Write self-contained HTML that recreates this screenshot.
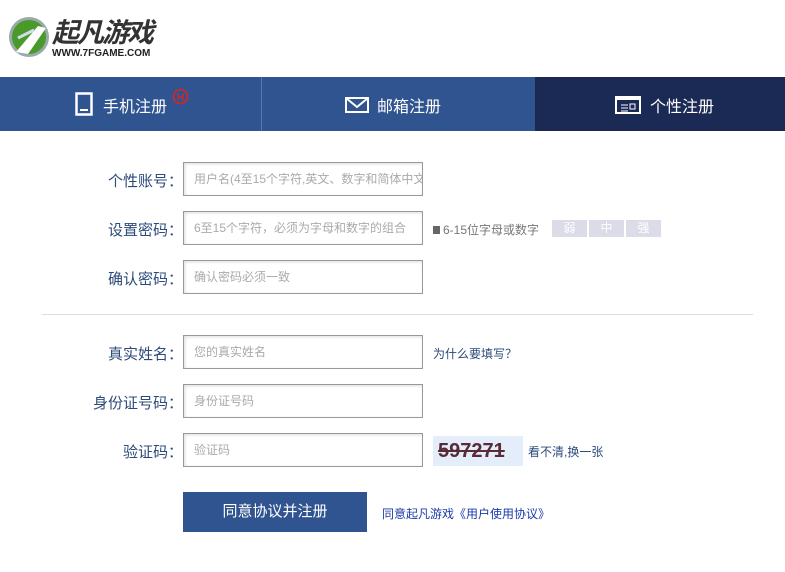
<!DOCTYPE html>
<html><head><meta charset="utf-8"><style>
*{margin:0;padding:0;box-sizing:border-box}
body{width:785px;height:572px;background:#fff;font-family:"Liberation Sans","Noto Sans CJK SC",sans-serif;position:relative;overflow:hidden}
.a{position:absolute}
.nav{left:0;top:77px;width:785px;height:54px;background:#2f5490}
.t{color:#fff;font-size:16px;top:16px;white-space:nowrap}
.lbl{color:#2c4a7a;font-size:15px;text-align:right;width:183px;left:0}
.in{left:183px;width:240px;height:34px;border:1px solid #999;box-shadow:inset 1px 1px 3px #ddd;color:#aaa;font-size:12px;padding-left:10px;line-height:32px;white-space:nowrap;overflow:hidden}
</style></head><body>
<svg class="a" style="left:8px;top:16px" width="42" height="42" viewBox="0 0 42 42"><circle cx="21" cy="21" r="20" fill="#9aa"/><circle cx="21" cy="21" r="17" fill="#4a9a2a"/><path d="M8 36 L30 10 L38 12 L20 38Z" fill="#fff"/><path d="M10 22 L26 14" stroke="#cde" stroke-width="3"/></svg>
<div class="a" style="left:52px;top:17px;font-size:27px;font-weight:bold;font-style:italic;color:#333;letter-spacing:-2px;line-height:32px">起凡游戏</div>
<div class="a" style="left:52px;top:48px;font-size:10px;font-weight:bold;color:#222">WWW.7FGAME.COM</div>
<div class="a nav">
 <svg class="a" style="left:75px;top:15px" width="18" height="24"><rect x="1.5" y="1.5" width="15" height="21" fill="none" stroke="#fff" stroke-width="2.5"/><rect x="5" y="17" width="8" height="2" fill="#fff"/></svg>
 <div class="a t" style="left:103px">手机注册</div>
 <svg class="a" style="left:172px;top:11px" width="17" height="17"><circle cx="8.5" cy="8.5" r="7" fill="none" stroke="#d22" stroke-width="1.6"/><text x="8.5" y="12.5" font-size="10" fill="#d22" text-anchor="middle" font-family="Liberation Sans" font-weight="bold">H</text></svg>
 <div class="a" style="left:261px;top:0;width:1px;height:54px;background:#5a78a8"></div>
 <svg class="a" style="left:345px;top:20px" width="24" height="16"><rect x="1" y="1" width="22" height="14" fill="none" stroke="#fff" stroke-width="2"/><path d="M1 1 L12 10 L23 1" fill="none" stroke="#fff" stroke-width="2"/></svg>
 <div class="a t" style="left:377px">邮箱注册</div>
 <div class="a" style="left:535px;top:0;width:250px;height:54px;background:#1b2a55"></div>
 <svg class="a" style="left:615px;top:19px" width="26" height="18"><rect x="1" y="1" width="24" height="16" fill="none" stroke="#fff" stroke-width="2"/><rect x="1" y="1" width="24" height="3" fill="#fff"/><path d="M6 9h7M6 12h7M6 15h7" stroke="#fff" stroke-width="1"/><rect x="15" y="8" width="5" height="5" fill="none" stroke="#fff"/></svg>
 <div class="a t" style="left:650px">个性注册</div>
</div>
<div class="a lbl" style="top:170px">个性账号：</div><div class="a in" style="top:162px">用户名(4至15个字符,英文、数字和简体中文)</div>
<div class="a lbl" style="top:219px">设置密码：</div><div class="a in" style="top:211px">6至15个字符，必须为字母和数字的组合</div>
<div class="a" style="left:433px;top:221px;font-size:12px;color:#777"><span style="display:inline-block;width:7px;height:8px;background:#666;margin-right:3px"></span>6-15位字母或数字</div>
<div class="a" style="left:552px;top:220px;width:35px;height:17px;background:#dcdce8;color:#fff;font-size:12px;text-align:center;line-height:17px">弱</div>
<div class="a" style="left:589px;top:220px;width:35px;height:17px;background:#dcdce8;color:#fff;font-size:12px;text-align:center;line-height:17px">中</div>
<div class="a" style="left:626px;top:220px;width:35px;height:17px;background:#dcdce8;color:#fff;font-size:12px;text-align:center;line-height:17px">强</div>
<div class="a lbl" style="top:268px">确认密码：</div><div class="a in" style="top:260px">确认密码必须一致</div>
<div class="a" style="left:42px;top:314px;width:711px;height:1px;background:#ddd"></div>
<div class="a lbl" style="top:343px">真实姓名：</div><div class="a in" style="top:335px">您的真实姓名</div>
<div class="a" style="left:433px;top:345px;font-size:12px;color:#2c4a7a">为什么要填写？</div>
<div class="a lbl" style="top:392px">身份证号码：</div><div class="a in" style="top:384px">身份证号码</div>
<div class="a lbl" style="top:441px">验证码：</div><div class="a in" style="top:433px">验证码</div>
<div class="a" style="left:433px;top:436px;width:90px;height:30px;background:#e4eefa;color:#5a2a38;font-size:20px;font-weight:bold;line-height:30px;padding-left:5px;letter-spacing:0px"><span style="text-decoration:line-through">597271</span></div>
<div class="a" style="left:528px;top:443px;font-size:12px;color:#2c4a7a">看不清,换一张</div>
<div class="a" style="left:183px;top:492px;width:184px;height:40px;background:#2f5490;color:#fff;font-size:15px;text-align:center;line-height:40px">同意协议并注册</div>
<div class="a" style="left:382px;top:505px;font-size:12px;color:#1a3aa8">同意起凡游戏《用户使用协议》</div>
</body></html>
